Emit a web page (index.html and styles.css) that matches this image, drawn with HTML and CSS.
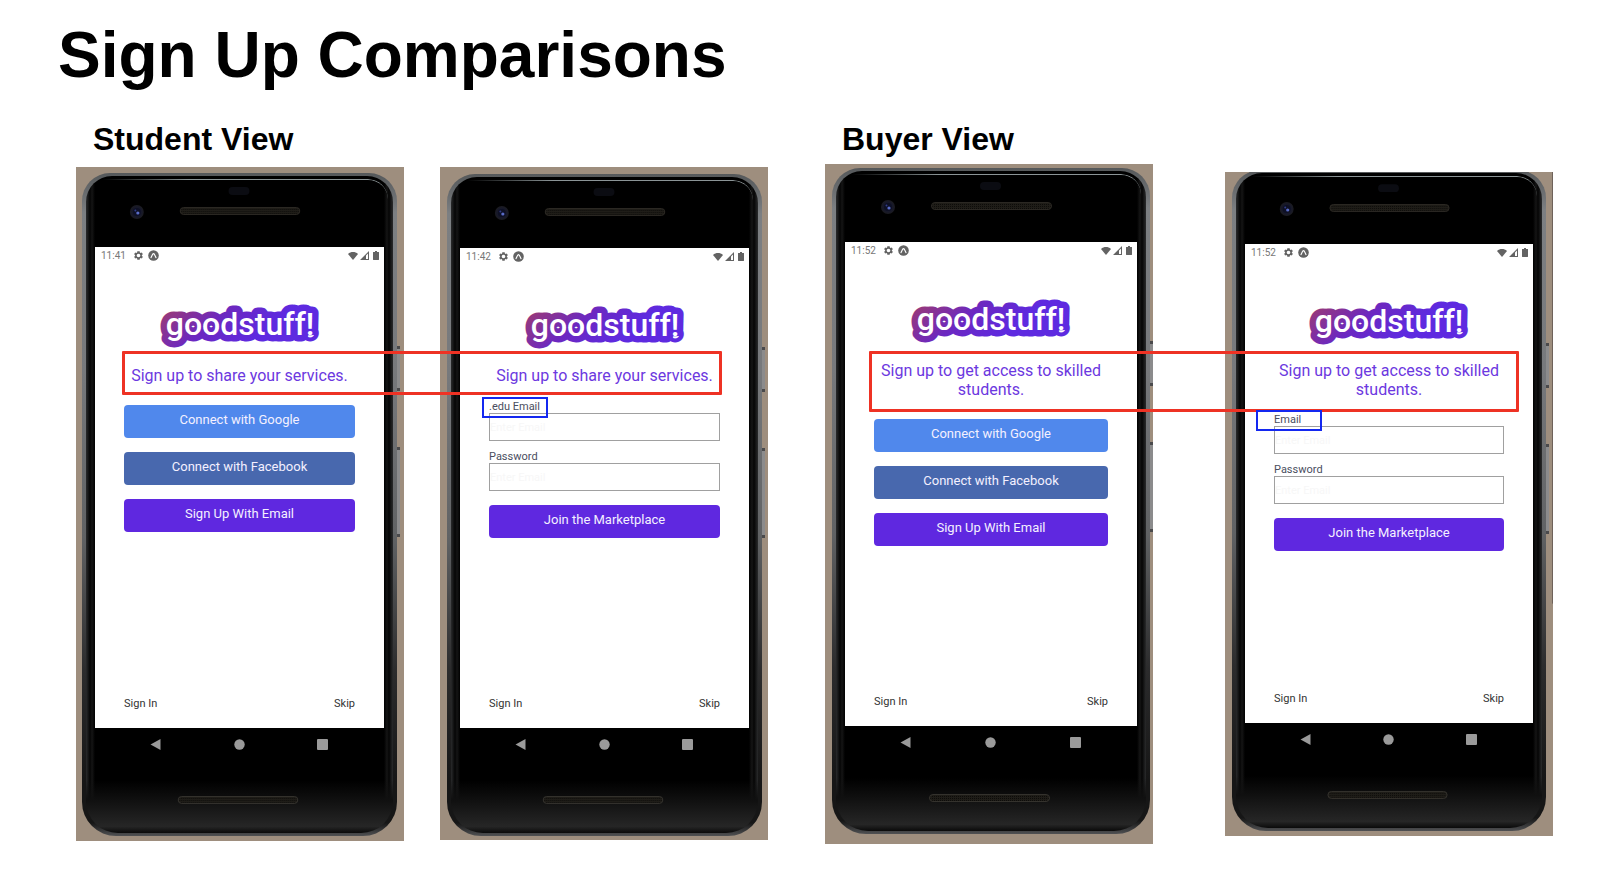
FILE: index.html
```html
<!DOCTYPE html>
<html lang="en">
<head>
<meta charset="utf-8">
<title>Sign Up Comparisons</title>
<link rel="stylesheet" href="styles.css">
</head>
<body>
<svg class="defs" width="0" height="0" aria-hidden="true">
  <defs>
    <linearGradient id="brand" gradientUnits="userSpaceOnUse" x1="14" y1="2" x2="62" y2="62">
      <stop offset="0" stop-color="#98397a"/>
      <stop offset="0.5" stop-color="#6c28c0"/>
      <stop offset="1" stop-color="#5e2ae0"/>
    </linearGradient>
    <radialGradient id="lens">
      <stop offset="0" stop-color="#3a4a9a"/>
      <stop offset="0.5" stop-color="#15172e"/>
      <stop offset="1" stop-color="#1b1b20"/>
    </radialGradient>
    <pattern id="mesh" width="2" height="2" patternUnits="userSpaceOnUse">
      <rect width="2" height="2" fill="#1f1d18"/>
      <rect width="1" height="1" fill="#0d0c0a"/>
    </pattern>
  </defs>
  <symbol id="earpiece" viewBox="0 0 290 74">
    <rect x="134" y="14" width="21" height="8" rx="4" fill="#0b0c12"/>
    <circle cx="42" cy="39" r="7" fill="url(#lens)"/>
    <circle cx="42" cy="39" r="4" fill="#0e1024"/>
    <circle cx="43" cy="40" r="1.6" fill="#5a6cc8"/>
    <circle cx="40.500" cy="37.500" r="1" fill="#303c86"/>
    <rect x="85.500" y="34.500" width="120" height="7" rx="3.500" fill="url(#mesh)" stroke="#2b2823"/>
  </symbol>
  <symbol id="mouthpiece" viewBox="0 0 290 86">
    <rect x="83.500" y="46.500" width="120" height="7" rx="3.500" fill="url(#mesh)" stroke="#34322d"/>
  </symbol>
  <symbol id="gear" viewBox="0 0 24 24">
    <path fill-rule="evenodd" d="M19.400 13a7.500 7.500 0 0 0 0-2l2.200-1.700-2.300-4-2.600 1a7.700 7.700 0 0 0-1.700-1L14.600 2.500H9.400L9 5.300a7.700 7.700 0 0 0-1.700 1l-2.600-1-2.300 4L4.600 11a7.500 7.500 0 0 0 0 2l-2.200 1.700 2.300 4 2.600-1a7.700 7.700 0 0 0 1.700 1l.4 2.800h5.200l.4-2.800a7.700 7.700 0 0 0 1.700-1l2.600 1 2.300-4zM12 16a4 4 0 1 1 0-8 4 4 0 0 1 0 8z"/>
  </symbol>
  <symbol id="expo" viewBox="0 0 24 24">
    <circle cx="12" cy="12" r="11.500"/>
    <path d="M6.500 16.500C8.500 14 9.500 8 12 8s3.500 6 5.500 8.500" fill="none" stroke="#fff" stroke-width="2.400" stroke-linecap="round"/>
  </symbol>
  <symbol id="wifi" viewBox="0 0 20 16"><path d="M10 16 0 4C3 1.200 6.300 0 10 0s7 1.200 10 4z"/></symbol>
  <symbol id="signal" viewBox="0 0 18 18"><path fill-rule="evenodd" d="M18 0v18H0zM16 5l-4 4v7h4z"/></symbol>
  <symbol id="battery" viewBox="0 0 12 18"><path d="M4 0h4v2h3.200c.5 0 .8.300.8.800v14.400c0 .5-.3.800-.8.800H.8c-.5 0-.8-.3-.8-.8V2.800C0 2.300.3 2 .8 2H4z"/></symbol>
  <symbol id="back" viewBox="0 0 11 11"><path d="M10.500 0v11L.5 5.500z"/></symbol>
  <symbol id="home" viewBox="0 0 11 11"><circle cx="5.500" cy="5.500" r="5.200"/></symbol>
  <symbol id="recent" viewBox="0 0 11 11"><rect width="11" height="11" rx="1"/></symbol>
</svg>

<main class="slide">
  <h1 class="slide-title">Sign Up Comparisons</h1>
  <div class="board">

    <section class="group group-student">
      <h2 class="group-title">Student View</h2>
      <div class="photos">
        <div class="photo photo-a">
          <div class="phone">
            <svg class="earpiece"><use href="#earpiece"/></svg>
            <div class="screen">
              <div class="status">
                <span class="time">11:41</span>
                <svg class="gear"><use href="#gear"/></svg>
                <svg class="expo"><use href="#expo"/></svg>
                <svg class="wifi"><use href="#wifi"/></svg>
                <svg class="signal"><use href="#signal"/></svg>
                <svg class="battery"><use href="#battery"/></svg>
              </div>
              <svg class="logo" viewBox="0 0 156 52"><text x="78" y="34" text-anchor="middle">goodstuff!</text></svg>
              <p class="pitch">Sign up to share your services.</p>
              <div class="actions">
                <button class="btn btn-google" type="button">Connect with Google</button>
                <button class="btn btn-facebook" type="button">Connect with Facebook</button>
                <button class="btn btn-brand" type="button">Sign Up With Email</button>
              </div>
              <div class="links"><a href="#signin">Sign In</a><a href="#skip">Skip</a></div>
            </div>
            <nav class="keys">
              <button type="button" aria-label="Back"><svg><use href="#back"/></svg></button>
              <button type="button" aria-label="Home"><svg><use href="#home"/></svg></button>
              <button type="button" aria-label="Recent apps"><svg><use href="#recent"/></svg></button>
            </nav>
            <svg class="mouthpiece"><use href="#mouthpiece"/></svg>
            <i class="side-key power"></i><i class="side-key volume"></i>
          </div>
        </div>

        <div class="photo photo-b">
          <div class="phone">
            <svg class="earpiece"><use href="#earpiece"/></svg>
            <div class="screen">
              <div class="status">
                <span class="time">11:42</span>
                <svg class="gear"><use href="#gear"/></svg>
                <svg class="expo"><use href="#expo"/></svg>
                <svg class="wifi"><use href="#wifi"/></svg>
                <svg class="signal"><use href="#signal"/></svg>
                <svg class="battery"><use href="#battery"/></svg>
              </div>
              <svg class="logo" viewBox="0 0 156 52"><text x="78" y="34" text-anchor="middle">goodstuff!</text></svg>
              <p class="pitch">Sign up to share your services.</p>
              <form class="form">
                <label class="label" for="student-email">.edu Email<span class="note"></span></label>
                <input class="input" id="student-email" type="email" placeholder="Enter Email">
                <label class="label" for="student-password">Password</label>
                <input class="input" id="student-password" type="password" placeholder="Enter Email">
                <button class="btn btn-brand" type="button">Join the Marketplace</button>
              </form>
              <div class="links"><a href="#signin">Sign In</a><a href="#skip">Skip</a></div>
            </div>
            <nav class="keys">
              <button type="button" aria-label="Back"><svg><use href="#back"/></svg></button>
              <button type="button" aria-label="Home"><svg><use href="#home"/></svg></button>
              <button type="button" aria-label="Recent apps"><svg><use href="#recent"/></svg></button>
            </nav>
            <svg class="mouthpiece"><use href="#mouthpiece"/></svg>
            <i class="side-key power"></i><i class="side-key volume"></i>
          </div>
        </div>
      </div>
      <div class="callout"></div>
    </section>

    <section class="group group-buyer">
      <h2 class="group-title">Buyer View</h2>
      <div class="photos">
        <div class="photo photo-c">
          <div class="phone">
            <svg class="earpiece"><use href="#earpiece"/></svg>
            <div class="screen">
              <div class="status">
                <span class="time">11:52</span>
                <svg class="gear"><use href="#gear"/></svg>
                <svg class="expo"><use href="#expo"/></svg>
                <svg class="wifi"><use href="#wifi"/></svg>
                <svg class="signal"><use href="#signal"/></svg>
                <svg class="battery"><use href="#battery"/></svg>
              </div>
              <svg class="logo" viewBox="0 0 156 52"><text x="78" y="34" text-anchor="middle">goodstuff!</text></svg>
              <p class="pitch">Sign up to get access to skilled students.</p>
              <div class="actions">
                <button class="btn btn-google" type="button">Connect with Google</button>
                <button class="btn btn-facebook" type="button">Connect with Facebook</button>
                <button class="btn btn-brand" type="button">Sign Up With Email</button>
              </div>
              <div class="links"><a href="#signin">Sign In</a><a href="#skip">Skip</a></div>
            </div>
            <nav class="keys">
              <button type="button" aria-label="Back"><svg><use href="#back"/></svg></button>
              <button type="button" aria-label="Home"><svg><use href="#home"/></svg></button>
              <button type="button" aria-label="Recent apps"><svg><use href="#recent"/></svg></button>
            </nav>
            <svg class="mouthpiece"><use href="#mouthpiece"/></svg>
            <i class="side-key power"></i><i class="side-key volume"></i>
          </div>
        </div>

        <div class="photo photo-d">
          <div class="phone">
            <svg class="earpiece"><use href="#earpiece"/></svg>
            <div class="screen">
              <div class="status">
                <span class="time">11:52</span>
                <svg class="gear"><use href="#gear"/></svg>
                <svg class="expo"><use href="#expo"/></svg>
                <svg class="wifi"><use href="#wifi"/></svg>
                <svg class="signal"><use href="#signal"/></svg>
                <svg class="battery"><use href="#battery"/></svg>
              </div>
              <svg class="logo" viewBox="0 0 156 52"><text x="78" y="34" text-anchor="middle">goodstuff!</text></svg>
              <p class="pitch">Sign up to get access to skilled students.</p>
              <form class="form">
                <label class="label" for="buyer-email">Email<span class="note"></span></label>
                <input class="input" id="buyer-email" type="email" placeholder="Enter Email">
                <label class="label" for="buyer-password">Password</label>
                <input class="input" id="buyer-password" type="password" placeholder="Enter Email">
                <button class="btn btn-brand" type="button">Join the Marketplace</button>
              </form>
              <div class="links"><a href="#signin">Sign In</a><a href="#skip">Skip</a></div>
            </div>
            <nav class="keys">
              <button type="button" aria-label="Back"><svg><use href="#back"/></svg></button>
              <button type="button" aria-label="Home"><svg><use href="#home"/></svg></button>
              <button type="button" aria-label="Recent apps"><svg><use href="#recent"/></svg></button>
            </nav>
            <svg class="mouthpiece"><use href="#mouthpiece"/></svg>
            <i class="side-key power"></i><i class="side-key volume"></i>
          </div>
        </div>
      </div>
      <div class="callout"></div>
    </section>

  </div>
</main>
</body>
</html>
```
FILE: styles.css
```css
* { box-sizing: border-box; }

body {
  margin: 0;
  background: #fff;
  color: #000;
  font-family: "Liberation Sans", Arial, sans-serif;
}

.defs { position: absolute; }

.slide { padding: 18px 69px 28px 76px; }

.slide-title {
  margin: 0 0 29px -18px;
  font-size: 64px;
  line-height: 74px;
}

.board {
  display: grid;
  grid-template-columns: 692fr 728fr;
  gap: 57px;
  align-items: start;
}

.group { position: relative; }

.group-title {
  margin: 0 0 10px 17px;
  font-size: 32px;
  line-height: 36px;
}

.photos {
  display: grid;
  grid-template-columns: 1fr 1fr;
  gap: 36px;
  align-items: start;
}

.group-buyer .group-title { margin-bottom: 7px; }
.group-buyer .photos { gap: 72px; }

/* Phone on its desk-coloured backdrop */
.photo {
  overflow: hidden;
  background: #9e8e7e;
  font-family: Roboto, "Liberation Sans", sans-serif;
}

.photo-a { padding: 6px 7px 5px 6px; }
.photo-b { padding: 7px 6px 4px 7px; }
.photo-c { padding: 4px 3px 10px 7px; }
.photo-d {
  margin-top: 8px;
  padding: 0 7px 5px;
  background: linear-gradient(#6e625a, #6e625a) right top / 1px 65% no-repeat #9e8e7e;
}
.photo-d .phone { margin-top: -2px; }

.phone {
  position: relative;
  display: flex;
  flex-direction: column;
  padding: 0 13px;
  border-radius: 28px 28px 34px 34px;
  background: linear-gradient(#55585a 0, #7c7f82 6%, #77797c 30%, #606264 55%, #2c2c2d 75%, #161616 92%, #161616 98%, #505153 100%);
}

.phone::before {
  content: "";
  position: absolute;
  inset: 3px 4px 3px;
  border-radius: 26px 26px 32px 32px;
  background:
    linear-gradient(transparent 92%, #101010 95%, #262626 99%, #0a0a0a 100%),
    linear-gradient(90deg, #2a2b2c 0, #050505 4px, #151515 6px, #000 9px, #000 calc(100% - 9px), #151515 calc(100% - 6px), #050505 calc(100% - 4px), #2a2b2c 100%);
}

.phone::after {
  content: "";
  position: absolute;
  top: 6px;
  left: 20px;
  right: 9px;
  height: 30px;
  border-top: 1px solid #8b9496;
  border-radius: 0 20px 0 0;
  mask-image: linear-gradient(90deg, transparent 0, #000 30%);
}

.earpiece, .mouthpiece {
  position: relative;
  display: block;
  width: 100%;
}
.earpiece { height: 74px; }
.mouthpiece { height: 86px; }

.side-key {
  position: absolute;
  right: -3px;
  width: 3px;
  border: solid #4a4a4c;
  border-width: 3px 0;
  background: #8b8b8c;
}
.power { top: 173px; height: 45px; }
.volume { top: 274px; height: 90px; }

.screen {
  position: relative;
  display: flex;
  flex-direction: column;
  min-height: 481px;
  background: #fff;
}
.photo-b .screen { min-height: 480px; }
.photo-c .screen { min-height: 484px; }
.photo-d .screen { min-height: 479px; }

.status {
  display: flex;
  align-items: center;
  height: 17px;
  padding: 0 5px 0 6px;
  fill: #636363;
}
.time {
  width: 32px;
  color: #777;
  font-size: 10px;
  line-height: 12px;
}
.gear { width: 11px; height: 11px; margin-right: 4px; }
.expo { width: 11px; height: 11px; }
.wifi { width: 10px; height: 8px; margin-left: auto; }
.signal { width: 9px; height: 9px; margin: 0 4px 0 2px; }
.battery { width: 6px; height: 9px; }

.logo {
  align-self: center;
  overflow: visible;
  width: 156px;
  height: 52px;
  margin: 37px 0 12px;
  fill: #fff;
  stroke: url(#brand);
  stroke-width: 13px;
  stroke-linejoin: round;
  paint-order: stroke;
  font-family: Roboto, sans-serif;
  font-size: 32px;
  font-weight: 500;
}

.pitch {
  margin: 0 29px;
  color: #6c38e0;
  font-size: 16px;
  line-height: 19px;
  text-align: center;
}

.photo-a .logo, .photo-c .logo { margin-bottom: 13px; }
.photo-d .logo { margin-bottom: 11px; }

.actions {
  display: grid;
  gap: 14px;
  margin: 20px 29px 0;
}

.btn {
  height: 33px;
  padding: 0 0 3px;
  border: 0;
  border-radius: 4px;
  color: #f4f0ff;
  font: 13px/16px Roboto, sans-serif;
}
.btn-google { background: #5088ec; }
.btn-facebook { background: #4868ae; }
.btn-brand { background: #5f28e0; }

.form {
  display: flex;
  flex-direction: column;
  margin: 15px 29px 0;
}
.photo-d .form { margin-top: 14px; }
.label {
  position: relative;
  align-self: flex-start;
  color: #4a4e60;
  font-size: 11px;
  line-height: 13px;
}
.input {
  width: 100%;
  height: 28px;
  margin-bottom: 9px;
  padding: 0;
  border: 1px solid #a0a0a0;
  background: #fff;
  font: 11px/13px Roboto, sans-serif;
}
.input::placeholder { color: #f7f7f7; opacity: 1; }
.form .btn { margin-top: 5px; }

.links {
  display: flex;
  justify-content: space-between;
  margin: auto 29px 18px;
  font-size: 11px;
  line-height: 13px;
}
.links a { color: #333; text-decoration: none; }

.keys {
  position: relative;
  display: flex;
  justify-content: space-between;
  padding: 11px 56px 0 55px;
}
.keys button {
  width: 11px;
  height: 11px;
  padding: 0;
  border: 0;
  background: none;
}
.keys svg {
  display: block;
  width: 11px;
  height: 11px;
  fill: #9a9a9a;
}

/* Markers drawn over the phones */
.callout {
  position: absolute;
  top: 230px;
  left: 46px;
  right: 46px;
  height: 44px;
  border: 3px solid #ee3224;
  border-radius: 1px;
}
.group-buyer .callout { left: 44px; right: 34px; height: 61px; }

.note {
  position: absolute;
  z-index: 1;
  top: -3px;
  left: -7px;
  width: 66px;
  height: 21px;
  border: 2px solid #1428f0;
}
.group-buyer .note { left: -18px; }
```
